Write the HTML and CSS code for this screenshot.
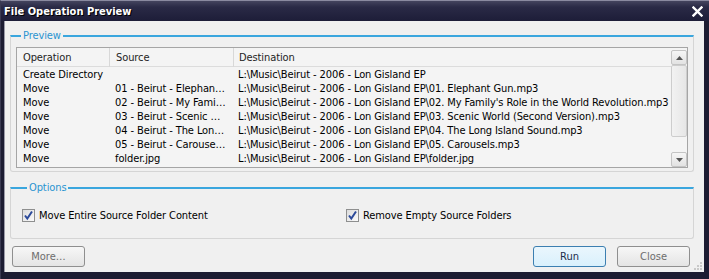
FILE: index.html
```html
<!DOCTYPE html>
<html lang="en">
<head>
  <meta charset="UTF-8">
  <title>File Operation Preview</title>
  <link rel="stylesheet" href="styles.css">
</head>
<body>

<div class="window">
  <div class="titlebar">
    <span class="title">File Operation Preview</span>
    <svg class="close" width="11" height="11" viewBox="0 0 11 11">
      <path d="M1.5 1.5 L9.5 9.5 M9.5 1.5 L1.5 9.5" stroke="#fff" stroke-width="2.4" stroke-linecap="square"/>
    </svg>
  </div>

  <div class="client">
    <fieldset class="group preview">
      <legend>Preview</legend>
      <div class="listview">
        <div class="list-main">
          <div class="list-row list-head">
            <span>Operation</span>
            <span>Source</span>
            <span>Destination</span>
          </div>
          <div class="list-row"><span>Create Directory</span><span></span><span>L:\Music\Beirut - 2006 - Lon Gisland EP</span></div>
          <div class="list-row"><span>Move</span><span>01 - Beirut - Elephan…</span><span>L:\Music\Beirut - 2006 - Lon Gisland EP\01. Elephant Gun.mp3</span></div>
          <div class="list-row"><span>Move</span><span>02 - Beirut - My Fami…</span><span>L:\Music\Beirut - 2006 - Lon Gisland EP\02. My Family's Role in the World Revolution.mp3</span></div>
          <div class="list-row"><span>Move</span><span>03 - Beirut - Scenic …</span><span>L:\Music\Beirut - 2006 - Lon Gisland EP\03. Scenic World (Second Version).mp3</span></div>
          <div class="list-row"><span>Move</span><span>04 - Beirut - The Lon…</span><span>L:\Music\Beirut - 2006 - Lon Gisland EP\04. The Long Island Sound.mp3</span></div>
          <div class="list-row"><span>Move</span><span>05 - Beirut - Carouse…</span><span>L:\Music\Beirut - 2006 - Lon Gisland EP\05. Carousels.mp3</span></div>
          <div class="list-row"><span>Move</span><span>folder.jpg</span><span>L:\Music\Beirut - 2006 - Lon Gisland EP\folder.jpg</span></div>
        </div>
        <div class="scrollbar">
          <div class="sb-btn">
            <svg width="7" height="4" viewBox="0 0 7 4"><path d="M0 4 L3.5 0 L7 4 Z" fill="#555"/></svg>
          </div>
          <div class="sb-thumb"></div>
          <div class="sb-track"></div>
          <div class="sb-btn">
            <svg width="7" height="4" viewBox="0 0 7 4"><path d="M0 0 L7 0 L3.5 4 Z" fill="#555"/></svg>
          </div>
        </div>
      </div>
    </fieldset>

    <fieldset class="group options">
      <legend>Options</legend>
      <label class="check wide">
        <span class="box"><svg width="11" height="11" viewBox="0 0 11 11"><path d="M2 5.5 L4.3 8.5 L9 1.5" fill="none" stroke="#2c4a9a" stroke-width="2"/></svg></span>
        Move Entire Source Folder Content
      </label>
      <label class="check">
        <span class="box"><svg width="11" height="11" viewBox="0 0 11 11"><path d="M2 5.5 L4.3 8.5 L9 1.5" fill="none" stroke="#2c4a9a" stroke-width="2"/></svg></span>
        Remove Empty Source Folders
      </label>
    </fieldset>

    <div class="buttons">
      <button class="btn muted">More…</button>
      <span class="spacer"></span>
      <button class="btn default">Run</button>
      <button class="btn muted">Close</button>
    </div>

    <svg class="grip" width="9" height="9" viewBox="0 0 9 9">
      <g fill="#c8c8c8">
        <rect x="6" y="0" width="2" height="2"/>
        <rect x="3" y="3" width="2" height="2"/><rect x="6" y="3" width="2" height="2"/>
        <rect x="0" y="6" width="2" height="2"/><rect x="3" y="6" width="2" height="2"/><rect x="6" y="6" width="2" height="2"/>
      </g>
    </svg>
  </div>
</div>

</body>
</html>
```

FILE: styles.css
```css
body {
  margin: 0;
  background: #1b1b2f;
  font-family: 'DejaVu Sans Condensed', 'Liberation Sans', Arial, sans-serif;
  font-size: 11px;
  letter-spacing: -0.1px;
  color: #000;
}
.window {
  width: 709px;
  height: 279px;
  box-sizing: border-box;
  background: #1c1c32;
  border-top: 1px solid #8a8aa0;
  border-left: 1px solid #3a3a52;
  display: flex;
  flex-direction: column;
}
.titlebar {
  height: 20px;
  display: flex;
  align-items: center;
  justify-content: space-between;
  padding: 0 6px 0 3px;
  background: linear-gradient(#44445e 0%, #2a2a46 30%, #1d1d38 100%);
}
.title {
  color: #fff;
  font-weight: bold;
  font-size: 11px;
  letter-spacing: 0;
  text-shadow: 1px 1px 0 #000;
}
.close {
  display: block;
}
.client {
  position: relative;
  margin: 0 5px 0 3px;
  height: 251px;
  background: #f0f0f0;
  border-left: 1px solid #9a9aa8;
  padding: 8px 0 0 0;
  box-sizing: border-box;
}
.group {
  border: 1px solid #d5d5d5;
  border-top: 2px solid #3aa6de;
  border-radius: 0 0 3px 3px;
  margin: 0 10px 0 5px;
  min-width: 0;
}
.group legend {
  color: #2a94d0;
  padding: 0 2px;
  margin-left: 5px;
  line-height: 13px;
}
.preview {
  padding: 5px 5px 3px 5px;
}
.options {
  margin-top: 9px;
  padding: 14px 0 16px 11px;
  display: flex;
}
.listview {
  height: 121px;
  box-sizing: border-box;
  border: 1px solid #a5a5a5;
  background: #f4f4f4;
  display: flex;
}
.list-main {
  flex: 1;
  overflow: hidden;
}
.list-row {
  display: grid;
  grid-template-columns: 92px 124px 1fr;
  height: 14px;
  line-height: 15px;
  white-space: nowrap;
}
.list-row span {
  padding-left: 6px;
}
.list-row span:last-child {
  padding-left: 5px;
}
.list-head {
  height: 18px;
  line-height: 19px;
  border-bottom: 1px solid #dcdcdc;
  color: #1e1e1e;
}
.list-head span + span {
  border-left: 1px solid #d8d8d8;
}
.scrollbar {
  width: 16px;
  padding-top: 2px;
  display: flex;
  flex-direction: column;
}
.sb-btn {
  height: 15px;
  box-sizing: border-box;
  border: 1px solid #c4c4c4;
  border-radius: 2px;
  background: linear-gradient(#f6f6f6, #e2e2e2);
  display: flex;
  align-items: center;
  justify-content: center;
}
.sb-thumb {
  height: 72px;
  box-sizing: border-box;
  border: 1px solid #cdcdcd;
  border-radius: 2px;
  background: linear-gradient(90deg, #f2f2f2, #e6e6e6);
}
.sb-track {
  flex: 1;
}
.check {
  display: flex;
  align-items: center;
  gap: 4px;
  height: 14px;
}
.check.wide {
  width: 324px;
}
.box {
  width: 13px;
  height: 13px;
  box-sizing: border-box;
  border: 1px solid #8e8f8f;
  background: linear-gradient(135deg, #dcdcdc, #fbfbfb);
  display: flex;
  align-items: center;
  justify-content: center;
}
.box svg {
  display: block;
}
.buttons {
  display: flex;
  gap: 11px;
  margin: 7px 14px 0 7px;
}
.spacer {
  flex: 1;
}
.btn {
  width: 73px;
  height: 21px;
  font-family: inherit;
  font-size: 11px;
  border: 1px solid #8f8f8f;
  border-radius: 3px;
  background: linear-gradient(#f3f3f3 0%, #ebebeb 50%, #dddddd 51%, #cfcfcf 100%);
  padding: 0;
}
.btn.muted {
  color: #6d6d6d;
  background: linear-gradient(#f7f7f7, #e4e4e4);
}
.btn.default {
  color: #1c2d4a;
  border-color: #3c7fb1;
  background: linear-gradient(#eaf6fd, #d9f0fc);
}
.grip {
  position: absolute;
  right: 1px;
  bottom: 1px;
}
```
